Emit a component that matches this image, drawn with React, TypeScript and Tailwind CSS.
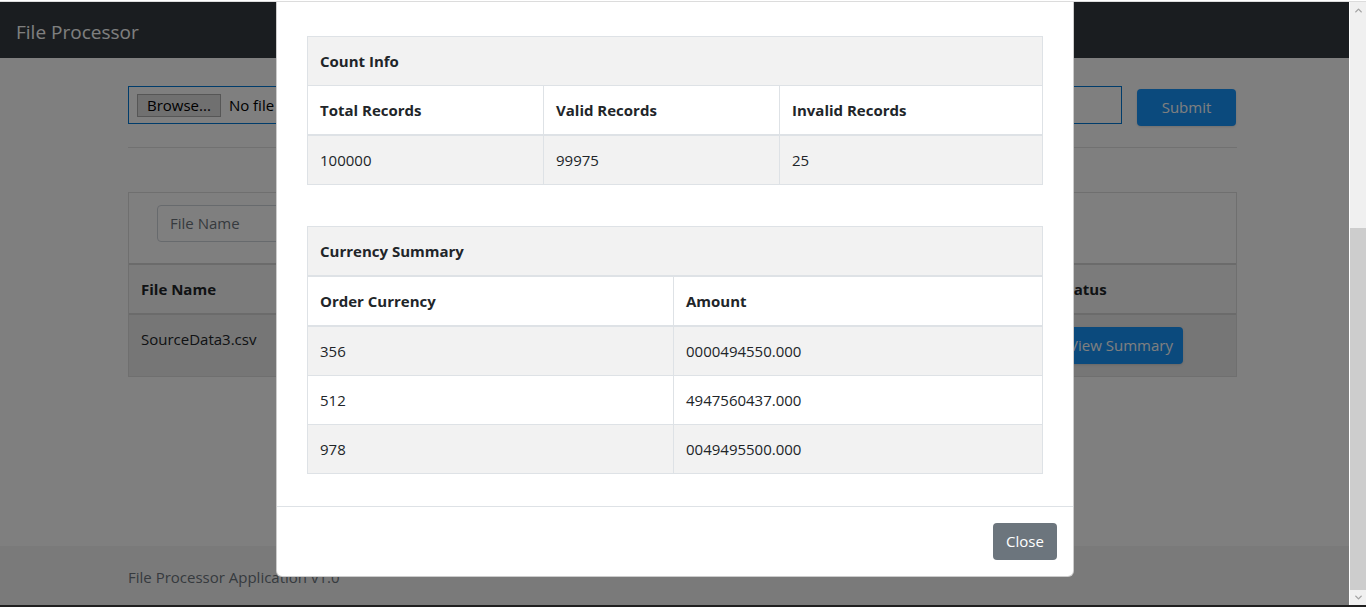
import { ChevronUp, ChevronDown } from "lucide-react";

const countInfo = { total: "100000", valid: "99975", invalid: "25" };

const currencies = [
  { code: "356", amount: "0000494550.000" },
  { code: "512", amount: "4947560437.000" },
  { code: "978", amount: "0049495500.000" },
];

const CountInfoTable = () => {
  return (
    <table className="w-full border-collapse border border-[#dee2e6] text-left">
      <thead>
        <tr className="bg-[#f2f2f2]">
          <th colSpan={3} className="border-b border-[#dee2e6] px-3 py-3 font-bold leading-6">
            Count Info
          </th>
        </tr>
        <tr className="bg-white">
          <th className="w-[236px] border-r border-b-2 border-[#dee2e6] px-3 py-3 font-bold leading-6">Total Records</th>
          <th className="w-[236px] border-r border-b-2 border-[#dee2e6] px-3 py-3 font-bold leading-6">Valid Records</th>
          <th className="border-b-2 border-[#dee2e6] px-3 py-3 font-bold leading-6">Invalid Records</th>
        </tr>
      </thead>
      <tbody>
        <tr className="bg-[#f2f2f2]">
          <td className="border-r border-[#dee2e6] px-3 py-3 leading-6">{countInfo.total}</td>
          <td className="border-r border-[#dee2e6] px-3 py-3 leading-6">{countInfo.valid}</td>
          <td className="px-3 py-3 leading-6">{countInfo.invalid}</td>
        </tr>
      </tbody>
    </table>
  );
};

const CurrencyTable = () => {
  return (
    <table className="w-full border-collapse border border-[#dee2e6] text-left">
      <thead>
        <tr className="bg-[#f2f2f2]">
          <th colSpan={2} className="border-b-2 border-[#dee2e6] px-3 py-3 font-bold leading-6">
            Currency Summary
          </th>
        </tr>
        <tr className="bg-white">
          <th className="w-[366px] border-r border-b-2 border-[#dee2e6] px-3 py-3 font-bold leading-6">Order Currency</th>
          <th className="border-b-2 border-[#dee2e6] px-3 py-3 font-bold leading-6">Amount</th>
        </tr>
      </thead>
      <tbody>
        {currencies.map((c, i) => (
          <tr key={c.code} className={i % 2 === 0 ? "bg-[#f2f2f2]" : "bg-white"}>
            <td className="border-r border-b border-[#dee2e6] px-3 py-3 leading-6">{c.code}</td>
            <td className="border-b border-[#dee2e6] px-3 py-3 leading-6">{c.amount}</td>
          </tr>
        ))}
      </tbody>
    </table>
  );
};

const App = () => {
  return (
    <div className="flex h-[607px] w-[1366px] flex-col overflow-hidden bg-white font-['Open_Sans',sans-serif] text-[15px] text-[#212529]">
      {/* thin window edge */}
      <div className="h-[2px] shrink-0 border-b border-[#dcdcdc] bg-white" />

      <div className="flex min-h-0 flex-1">
        {/* page */}
        <div className="relative flex w-[1349px] flex-col overflow-hidden">
          <nav className="flex h-[56px] shrink-0 items-center bg-[#343a40] px-4 pt-[4px]">
            <span className="text-[19px] leading-none text-white">File Processor</span>
          </nav>

          <main className="ml-[128px] w-[1109px] flex-1">
            <div className="mt-[28px] flex items-start gap-[15px]">
              <div className="flex h-[38px] w-[994px] items-center gap-2 border border-[#0078d7] px-2">
                <span className="border border-[#adadad] bg-[#e1e1e1] px-[9px] text-[15px] leading-[21px] text-black">
                  Browse...
                </span>
                <span className="text-black">No file selected.</span>
              </div>
              <button className="mt-[3px] h-[37px] w-[99px] rounded bg-[#1694fa] text-white shadow">
                Submit
              </button>
            </div>

            <hr className="mt-[21px] border-t border-[#e2e2e2]" />

            <div className="mt-[44px] border border-[#dedede]">
              <div className="px-[28px] pt-3 pb-[21px]">
                <div className="flex h-[37px] w-[320px] items-center rounded border border-[#ced4da] px-3 text-[#6c757d]">
                  File Name
                </div>
              </div>
              <table className="w-full border-collapse text-left">
                <thead>
                  <tr className="bg-[#f6f6f6]">
                    <th className="border-t-2 border-b-2 border-[#d6d6d6] px-3 py-3 font-bold leading-6">File Name</th>
                    <th className="border-t-2 border-b-2 border-[#d6d6d6] px-3 py-3 font-bold leading-6">Uploaded On</th>
                    <th className="border-t-2 border-b-2 border-[#d6d6d6] px-3 py-3 font-bold leading-6">Records</th>
                    <th className="w-[189px] border-t-2 border-b-2 border-[#d6d6d6] px-3 py-3 font-bold leading-6">Status</th>
                  </tr>
                </thead>
                <tbody>
                  <tr className="bg-[#ececec]">
                    <td className="px-3 py-3 align-top leading-6">SourceData3.csv</td>
                    <td className="px-3 py-3 align-top leading-6">2019-05-12</td>
                    <td className="px-3 py-3 align-top leading-6">100000</td>
                    <td className="px-3 py-3">
                      <button className="h-[37px] w-[124px] rounded bg-[#1694fa] text-white shadow">View Summary</button>
                    </td>
                  </tr>
                </tbody>
              </table>
            </div>
          </main>

          <footer className="flex h-[59px] shrink-0 items-center bg-[#f5f5f5] pl-[128px] pt-[4px] text-[#6c757d]">
            File Processor Application v1.0
          </footer>

          {/* backdrop */}
          <div className="absolute inset-0 bg-black/50" />

          {/* modal, scrolled so its top lies above the window */}
          <div className="absolute bottom-[28px] left-[276px] flex w-[798px] flex-col rounded-md border border-black/20 bg-white">
            <div className="px-[30px] pt-[90px] pb-[32px]">
              <CountInfoTable />
              <div className="mt-[41px]">
                <CurrencyTable />
              </div>
            </div>
            <div className="flex justify-end border-t border-[#dee2e6] p-4">
              <button className="h-[37px] w-[64px] rounded bg-[#6c757d] text-white">Close</button>
            </div>
          </div>
        </div>

        {/* scrollbar */}
        <div className="flex w-[17px] flex-col border-l border-white bg-[#f0f0f0]">
          <div className="flex h-[17px] items-center justify-center text-[#a3a3a3]">
            <ChevronUp size={11} strokeWidth={3} />
          </div>
          <div className="mt-[209px] h-[362px] bg-[#cdcdcd]" />
          <div className="flex flex-1 items-end justify-center pb-[2px] text-[#a3a3a3]">
            <ChevronDown size={11} strokeWidth={3} />
          </div>
        </div>
      </div>

      <div className="h-[2px] shrink-0 bg-[#1f1f1f]" />
    </div>
  );
};

export default App;
